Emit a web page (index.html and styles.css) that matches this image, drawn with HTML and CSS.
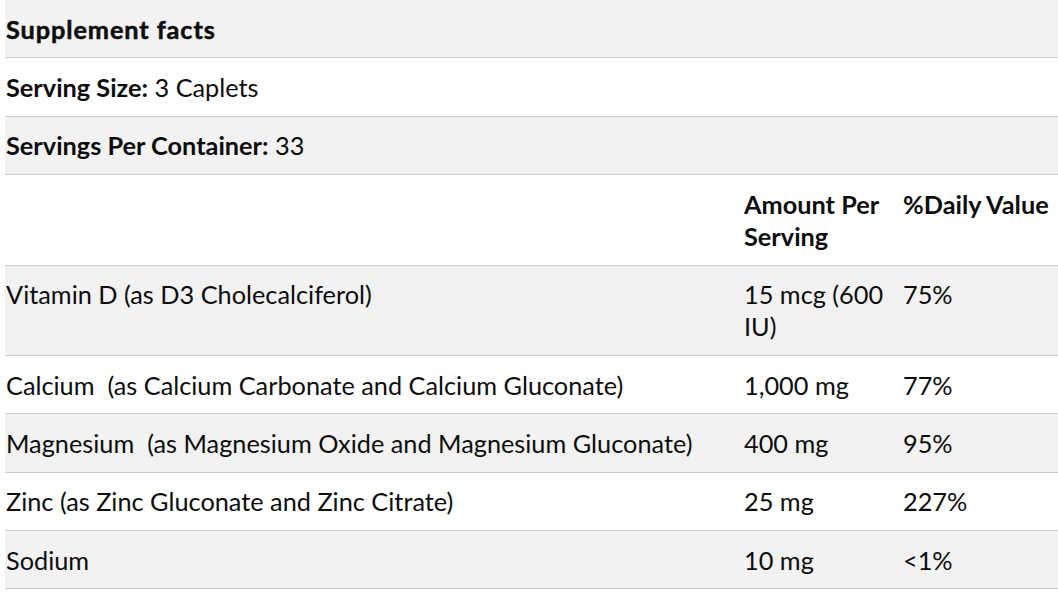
FILE: index.html
```html
<!DOCTYPE html>
<html lang="en">
<head>
<meta charset="utf-8">
<title>Supplement facts</title>
<link rel="stylesheet" href="styles.css">
</head>
<body>
<table class="facts">
  <colgroup>
    <col class="col-name">
    <col class="col-amount">
    <col class="col-dv">
  </colgroup>
  <tbody>
    <tr class="stripe"><td colspan="3"><strong class="title">Supplement facts</strong></td></tr>
    <tr><td colspan="3"><strong>Serving Size:</strong> 3 Caplets</td></tr>
    <tr class="stripe"><td colspan="3"><strong>Servings Per Container:</strong> 33</td></tr>
    <tr class="head"><td></td><td><strong>Amount Per Serving</strong></td><td><strong>%Daily Value</strong></td></tr>
    <tr class="stripe"><td>Vitamin D (as D3 Cholecalciferol)</td><td>15 mcg (600 IU)</td><td>75%</td></tr>
    <tr><td>Calcium &nbsp;(as Calcium Carbonate and Calcium Gluconate)</td><td>1,000 mg</td><td>77%</td></tr>
    <tr class="stripe"><td>Magnesium &nbsp;(as Magnesium Oxide and Magnesium Gluconate)</td><td>400 mg</td><td>95%</td></tr>
    <tr><td>Zinc (as Zinc Gluconate and Zinc Citrate)</td><td>25 mg</td><td>227%</td></tr>
    <tr class="stripe"><td>Sodium</td><td>10 mg</td><td>&lt;1%</td></tr>
  </tbody>
</table>
</body>
</html>
```
FILE: styles.css
```css
html, body {
  margin: 0;
  padding: 0;
  background: #ffffff;
}
body {
  padding-left: 5px;
  font-family: Lato, "Open Sans", sans-serif;
  font-size: 25.3px;
  line-height: 32px;
  color: #0d0d0d;
}
.facts {
  width: 1053px;
  border-collapse: collapse;
  table-layout: fixed;
}
.col-name { width: 739px; }
.col-amount { width: 159px; }
.col-dv { width: 155px; }
.facts td {
  padding: 12.7px 0;
  border-bottom: 1px solid #cccccc;
  vertical-align: top;
  text-align: left;
}
.facts td:first-child {
  padding-left: 1px;
}
.facts .stripe td {
  background: #f2f2f2;
}
.facts strong {
  font-weight: 700;
}
.facts .title {
  letter-spacing: 0.9px;
  -webkit-text-stroke: 0.5px currentColor;
}
```
